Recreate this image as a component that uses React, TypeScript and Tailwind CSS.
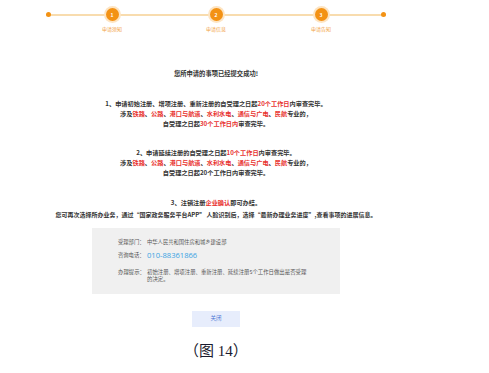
import React from "react";

const R = ({ children }: { children: React.ReactNode }) => (
  <span className="text-[#e8322f]">{children}</span>
);

const Step = ({ n, label, cls }: { n: string; label: string; cls: string }) => (
  <div className={`flex flex-col items-center w-[40px] ${cls}`}>
    <div className="w-[17px] h-[17px] rounded-full bg-[#fde4c2] flex items-center justify-center">
      <div className="w-[13px] h-[13px] rounded-full bg-[#f39214] flex items-center justify-center text-white text-[5px] leading-none font-bold">
        {n}
      </div>
    </div>
    <div className="mt-[3px] text-[5px] leading-[6px] text-[#f2a040] whitespace-nowrap">{label}</div>
  </div>
);

const Middle = () => (
  <>
    涉及<R>铁路</R>、<R>公路</R>、<R>港口与航道</R>、<R>水利水电</R>、<R>通信与广电</R>、<R>民航</R>专业的，
  </>
);

export default function App() {
  return (
    <div
      className="w-[489px] h-[373px] bg-white overflow-hidden"
      style={{ fontFamily: '"Noto Sans CJK SC", "Noto Sans", sans-serif' }}
    >
      <div className="w-[432px] flex flex-col items-center text-[#333]">
        {/* steps */}
        <div className="self-start ml-[46px] pt-[6px] relative w-[340px]">
          <div className="absolute left-0 right-0 top-[13.5px] h-[2px] bg-[#f8dcae]" />
          <div className="relative flex items-start">
            <div className="mt-[6px] w-[5px] h-[5px] rounded-full bg-[#f39214]" />
            <Step n="1" label="申请须知" cls="ml-[41px]" />
            <Step n="2" label="申请信息" cls="ml-[64px]" />
            <Step n="3" label="申请告知" cls="ml-[65px]" />
            <div className="mt-[6px] ml-[40px] w-[5px] h-[5px] rounded-full bg-[#f39214]" />
          </div>
        </div>

        <div className="mt-[37px] text-[6.3px] leading-[10px] font-bold whitespace-nowrap">
          您所申请的事项已经提交成功!
        </div>

        <div className="mt-[20px] text-[6.2px] leading-[10px] font-bold text-center whitespace-nowrap">
          <div>
            1、申请初始注册、增项注册、重新注册的自受理之日起<R>20个工作日</R>内审查完毕。
          </div>
          <div>
            <Middle />
          </div>
          <div>
            自受理之日起<R>30个工作日内</R>审查完毕。
          </div>
        </div>

        <div className="mt-[19px] text-[6.2px] leading-[10px] font-bold text-center whitespace-nowrap">
          <div>
            2、申请延续注册的自受理之日起<R>10个工作日</R>内审查完毕。
          </div>
          <div>
            <Middle />
          </div>
          <div>自受理之日起20个工作日内审查完毕。</div>
        </div>

        <div className="mt-[20px] text-[6.2px] leading-[10px] font-bold text-center whitespace-nowrap">
          3、注销注册<R>企业确认</R>即可办结。
        </div>
        <div className="mt-[2px] text-[6px] leading-[10px] font-bold text-center whitespace-nowrap">
          您可再次选择所办业务，通过“国家政务服务平台APP” 人脸识别后，选择“最新办理业务进度”,查看事项的进展信息。
        </div>

        <div className="mt-[8px] w-[248px] bg-[#f0f0f0] pl-[26px] pt-[10px] pb-[11px] text-[#555]">
          <div className="flex text-[5.3px] leading-[8px]">
            <span className="w-[29px] shrink-0">受理部门：</span>
            <span>中华人民共和国住房和城乡建设部</span>
          </div>
          <div className="mt-[5px] flex items-center h-[10px]">
            <span className="w-[29px] shrink-0 text-[5.3px]">咨询电话：</span>
            <span className="text-[7.6px] text-[#3aa3e3]" style={{ fontFamily: '"Open Sans", "Noto Sans", sans-serif' }}>
              010-88361866
            </span>
          </div>
          <div className="mt-[7.5px] flex text-[5.4px] leading-[7px]">
            <span className="w-[29px] shrink-0">办理提示：</span>
            <span className="w-[160px]">
              初始注册、增项注册、重新注册、延续注册5个工作日做出是否受理的决定。
            </span>
          </div>
        </div>

        <div className="mt-[17px] w-[48px] h-[16px] bg-[#e7edfc] flex items-center justify-center text-[5.5px] text-[#4d78d4]">
          关闭
        </div>

        <div
          className="mt-[14px] text-[15px] leading-[20px] text-[#1a1a2e] whitespace-nowrap"
          style={{ fontFamily: '"Liberation Serif", "Noto Sans CJK SC", serif' }}
        >
          （图 14）
        </div>
      </div>
    </div>
  );
}
